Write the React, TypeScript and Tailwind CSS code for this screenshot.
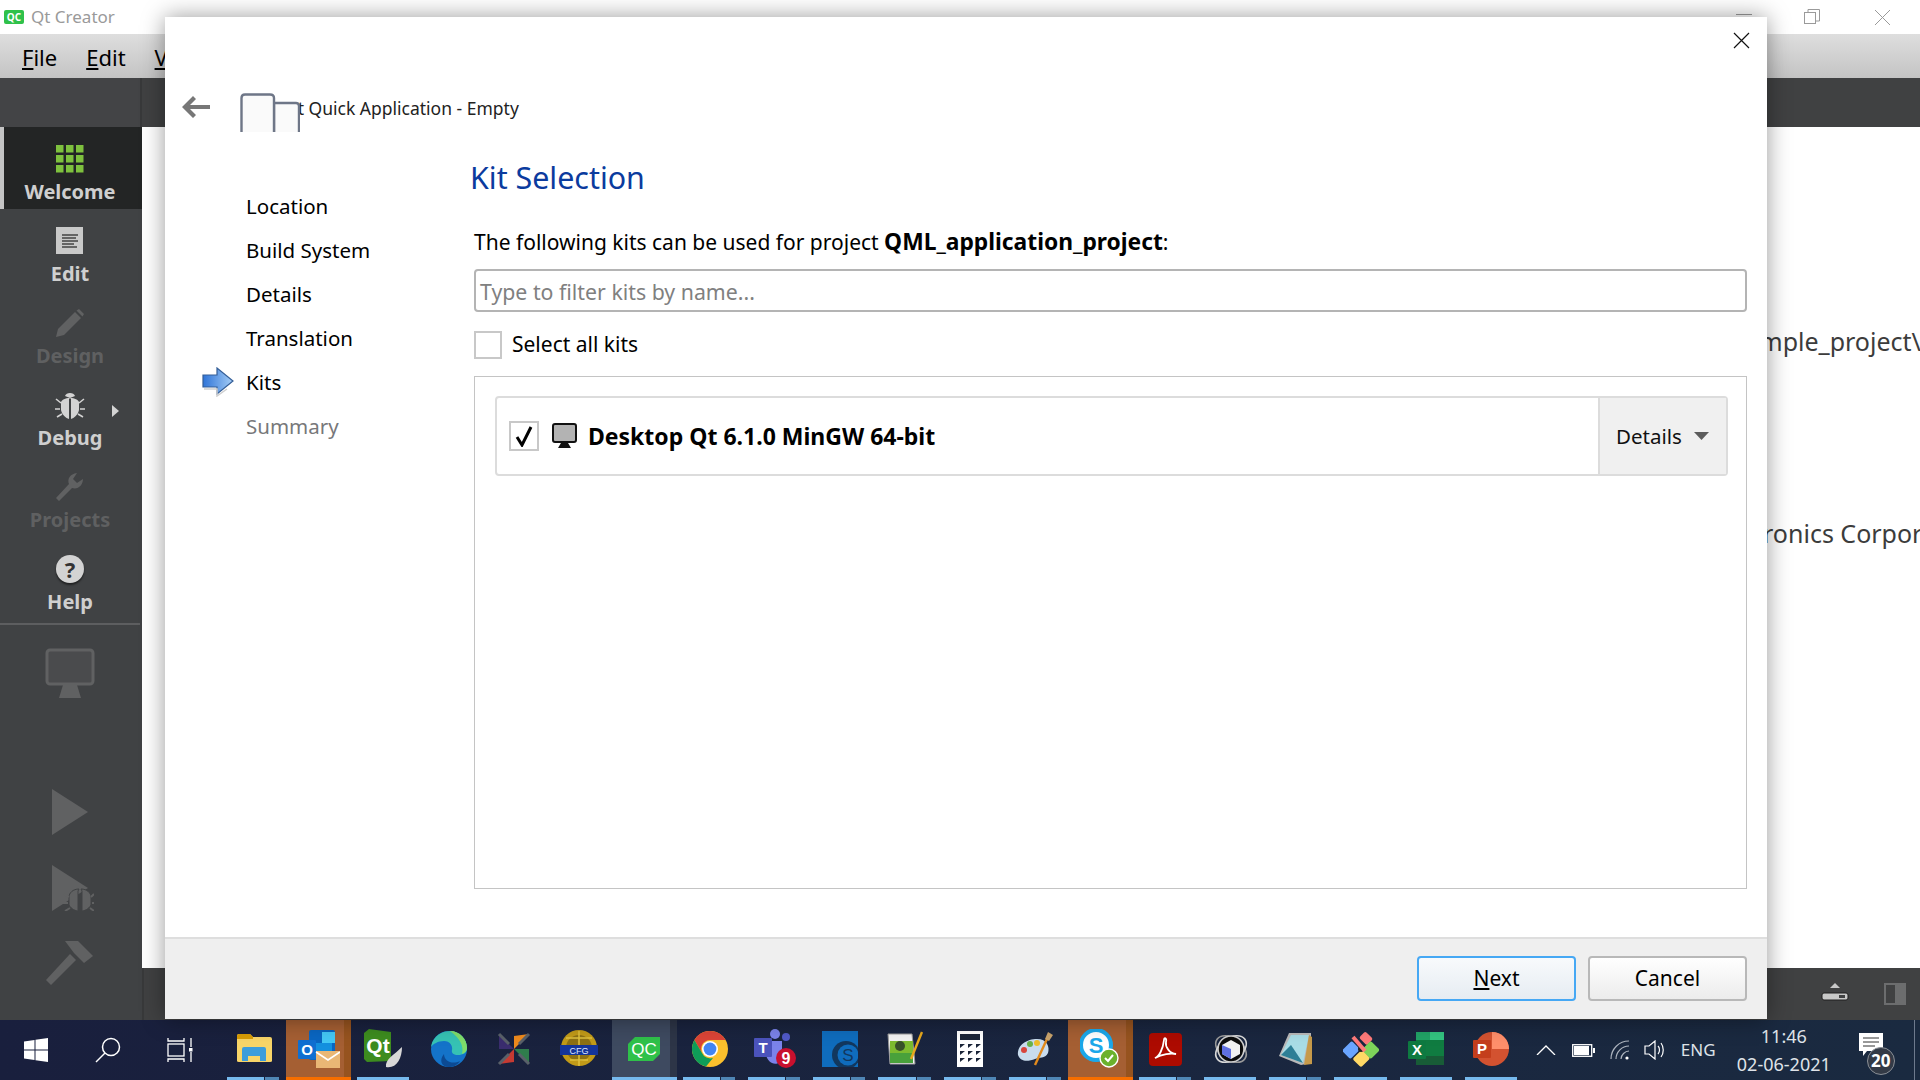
import type { ReactNode } from 'react'

const ui = { fontFamily: '"Noto Sans", "Open Sans", sans-serif' }

function WelcomeIcon() {
  const cells = [0, 1, 2]
  return (
    <svg width="28" height="28" viewBox="0 0 28 28">
      {cells.map((y) =>
        cells.map((x) => <rect key={`${x}-${y}`} x={x * 10} y={y * 10} width="7.5" height="7.5" fill="#7ec13e" />),
      )}
    </svg>
  )
}

function EditIcon() {
  return (
    <svg width="28" height="28" viewBox="0 0 28 28">
      <rect width="27" height="27" fill="#c9c9c9" />
      <path d="M6 8h16M6 11h14M6 14h16M6 17h12M6 20h15" stroke="#444" strokeWidth="1.4" />
    </svg>
  )
}

function PencilIcon() {
  return (
    <svg width="28" height="28" viewBox="0 0 28 28">
      <path d="M0 28 L2 20 L19 3 L25 9 L8 26 Z M20.5 1.5 L23 0 L28 5 L26.5 7.5 Z" fill="#606162" />
    </svg>
  )
}

function BugIcon() {
  return (
    <svg width="30" height="28" viewBox="0 0 30 28">
      <path d="M15 7 C10 7 7 9 6 11 L6 19 C7 24 11 27 14 28 L14 8 Z M15 7 C20 7 23 9 24 11 L24 19 C23 24 19 27 16 28 L16 8 Z" fill="#d3d3d3" />
      <path d="M10 5 C11 1 19 1 20 5 L15 7 Z" fill="#d3d3d3" />
      <path d="M6 12 L1 8 M24 12 L29 8 M5 18 H0 M25 18 H30 M7 23 L2 26 M23 23 L28 26" stroke="#d3d3d3" strokeWidth="1.6" />
    </svg>
  )
}

function WrenchIcon() {
  return (
    <svg width="28" height="28" viewBox="0 0 28 28">
      <path d="M3 28 L0 25 L13 11 C11 6 14 1 21 0 L17 6 L21 10 L27 6 C27 12 22 17 16 15 Z" fill="#606162" />
    </svg>
  )
}

function HelpIcon() {
  return (
    <div className="w-[28px] h-[28px] rounded-full bg-[#d3d3d3] flex items-center justify-center text-[22px] leading-none font-bold text-[#333] shadow-[0_2px_2px_rgba(0,0,0,0.5)]">
      ?
    </div>
  )
}

function SideItem({
  label,
  icon,
  active,
  disabled,
  arrow,
}: {
  label: string
  icon: ReactNode
  active?: boolean
  disabled?: boolean
  arrow?: boolean
}) {
  return (
    <div
      className={`relative h-[82px] flex flex-col items-center pt-[18px] pr-[2px] ${
        active ? 'bg-[#232525] border-l-4 border-[#c4c4c4] pr-[6px]' : ''
      }`}
    >
      <div className="h-[28px] flex items-center justify-center">{icon}</div>
      <span
        className={`mt-[6px] text-[20px] leading-[26px] font-bold ${
          disabled ? 'text-[#5f6061]' : 'text-[#cfcfcf]'
        }`}
      >
        {label}
      </span>
      {arrow && (
        <svg className="absolute left-[112px] top-[32px]" width="7" height="12" viewBox="0 0 7 12">
          <path d="M0 0 L7 6 L0 12 Z" fill="#d3d3d3" />
        </svg>
      )}
    </div>
  )
}

function Sidebar() {
  return (
    <div className="w-[142px] shrink-0 bg-[#404244] flex flex-col">
      <SideItem label="Welcome" icon={<WelcomeIcon />} active />
      <SideItem label="Edit" icon={<EditIcon />} />
      <SideItem label="Design" icon={<PencilIcon />} disabled />
      <SideItem label="Debug" icon={<BugIcon />} arrow />
      <SideItem label="Projects" icon={<WrenchIcon />} disabled />
      <SideItem label="Help" icon={<HelpIcon />} />
      <div className="h-[2px] mt-[4px] mr-[2px] bg-[#5d5e60]" />
      <div className="flex flex-col items-center pr-[2px]">
        <svg className="mt-[23px]" width="50" height="50" viewBox="0 0 50 50">
          <rect x="2" y="2" width="46" height="34" rx="3" fill="#4a4b4d" stroke="#606162" strokeWidth="3" />
          <path d="M18 37 H32 L36 50 H14 Z" fill="#606162" />
        </svg>
        <svg className="mt-[91px]" width="36" height="46" viewBox="0 0 36 46">
          <path d="M0 0 L36 23 L0 46 Z" fill="#606162" />
        </svg>
        <svg className="mt-[30px] ml-[6px]" width="42" height="46" viewBox="0 0 42 46">
          <path d="M0 0 L36 23 L0 46 Z" fill="#606162" />
          <path d="M27 24 C21 24 17 28 17 32 L17 40 C19 44 24 46 26 46 L26 26 Z M29 24 C35 24 39 28 39 32 L39 40 C37 44 32 46 30 46 L30 26 Z" fill="#606162" stroke="#404244" />
          <path d="M17 32 L12 29 M39 32 L42 29 M16 38 H11 M40 38 H42 M18 43 L13 46 M38 43 L42 46" stroke="#606162" strokeWidth="2" />
        </svg>
        <svg className="mt-[30px]" width="48" height="44" viewBox="0 0 48 44">
          <path d="M0 39 L24 13 L30 19 L5 44 Z" fill="#606162" />
          <path d="M19 0 H32 L47 15 L38 22 L28 12 Z" fill="#606162" />
        </svg>
      </div>
    </div>
  )
}

function WizardTile() {
  return (
    <svg className="absolute left-0 top-0" width="60" height="39" viewBox="0 0 60 39">
      <path d="M34 40 V10 H56 Q59 10 59 13 V40" fill="#fafafa" stroke="#6e7687" strokeWidth="2.4" />
      <path d="M1.5 40 V5 Q1.5 1.5 5 1.5 H30 Q34 1.5 34 5 V40" fill="#fafafa" stroke="#6e7687" strokeWidth="2.4" />
    </svg>
  )
}

function KitArrow() {
  return (
    <svg width="32" height="30" viewBox="0 0 32 30">
      <defs>
        <linearGradient id="kitArrow" x1="0" y1="0" x2="1" y2="0">
          <stop offset="0" stopColor="#2f74d8" />
          <stop offset="1" stopColor="#a5cdf5" />
        </linearGradient>
      </defs>
      <path d="M1 8 H15 V1 L31 14 L15 27 V20 H1 Z" fill="url(#kitArrow)" stroke="#345e97" strokeWidth="1.2" />
      <path d="M2 22 H15 V29 L25 22" fill="none" stroke="#cfcfcf" strokeWidth="1.5" />
    </svg>
  )
}

function Dialog() {
  const steps = ['Location', 'Build System', 'Details', 'Translation', 'Kits', 'Summary']
  return (
    <div
      style={ui}
      className="absolute left-[165px] top-[17px] w-[1602px] h-[1002px] bg-white flex flex-col shadow-[0_0_22px_rgba(0,0,0,0.4)]"
    >
      <svg className="absolute left-[1568px] top-[15px]" width="17" height="17" viewBox="0 0 17 17">
        <path d="M1 1 L16 16 M16 1 L1 16" stroke="#111" strokeWidth="1.2" />
      </svg>

      <div className="h-[110px] shrink-0 flex items-start pt-[76px] pl-[17px]">
        <svg className="mt-[2px]" width="28" height="24" viewBox="0 0 28 24">
          <path d="M0 12 L11 1 L14 4 L8 10 H28 V14 H8 L14 20 L11 23 Z" fill="#777" />
        </svg>
        <div className="relative ml-[30px] w-[300px] h-[39px] pl-[44px] text-[17.5px] leading-[30px] text-[#222] whitespace-nowrap">
          Qt Quick Application - Empty
          <WizardTile />
        </div>
      </div>

      <div className="flex-1 min-h-0 flex">
        <div className="w-[305px] shrink-0 pl-[37px] pt-[57px] flex flex-col text-[20.5px] text-black">
          {steps.map((step) => (
            <div key={step} className="h-[44px] flex items-center">
              <div className="w-[44px] shrink-0">{step === 'Kits' && <KitArrow />}</div>
              <span className={step === 'Summary' ? 'text-[#77787a]' : ''}>{step}</span>
            </div>
          ))}
        </div>

        <div className="flex-1 min-w-0 pr-[20px] pt-[31px] pb-[48px] flex flex-col">
          <h1 className="text-[30.4px] leading-[40px] text-[#0b3b9e]">Kit Selection</h1>
          <div className="pl-[4px] flex-1 min-h-0 flex flex-col">
            <p className="mt-[29px] text-[21px] leading-[30px] text-black">
              The following kits can be used for project <b className="text-[22.8px]">QML_application_project</b>:
            </p>
            <div className="mt-[12px] h-[43px] shrink-0 border-2 border-[#b4b4b4] rounded-[4px] pl-[4px] pt-[2px] flex items-center text-[21.3px] text-[#808080]">
              Type to filter kits by name...
            </div>
            <div className="mt-[19px] h-[28px] shrink-0 flex items-center gap-[10px] text-[21px] text-black">
              <div className="w-[28px] h-[28px] border-2 border-[#c8c8c8]" />
              Select all kits
            </div>
            <div className="mt-[17px] flex-1 min-h-0 border border-[#c4c4c4] pt-[19px] pl-[20px] pr-[18px]">
              <div className="h-[80px] border-2 border-[#dcdcdc] rounded-[4px] flex">
                <div className="flex-1 flex items-center pl-[12px]">
                  <div className="w-[30px] h-[30px] border-2 border-[#c8c8c8] flex items-center justify-center">
                    <svg width="20" height="22" viewBox="0 0 20 22">
                      <path d="M3 12 L8 20 L17 2" fill="none" stroke="#000" strokeWidth="3" />
                    </svg>
                  </div>
                  <svg className="ml-[13px]" width="25" height="26" viewBox="0 0 25 26">
                    <rect x="1" y="1" width="23" height="18" rx="2" fill="#b3b3b3" stroke="#111" strokeWidth="2" />
                    <path d="M9 20 H16 L19 25 H6 Z" fill="#111" />
                  </svg>
                  <span className="ml-[11px] text-[23px] font-bold text-black">Desktop Qt 6.1.0 MinGW 64-bit</span>
                </div>
                <div className="w-[128px] border-l-2 border-[#dcdcdc] bg-[#f0f0f0] flex items-center pl-[16px] gap-[12px] text-[20.5px] text-[#111]">
                  Details
                  <svg width="15" height="8" viewBox="0 0 15 8">
                    <path d="M0 0 H15 L7.5 8 Z" fill="#5c5c5c" />
                  </svg>
                </div>
              </div>
            </div>
          </div>
        </div>
      </div>

      <div className="h-[82px] shrink-0 bg-[#efefef] border-t-2 border-[#dedede] flex items-center justify-end gap-[12px] pr-[20px] pb-[2px] text-[21px] text-black">
        <button className="w-[159px] h-[45px] pt-[2px] rounded-[4px] border-2 border-[#46a8f4] bg-gradient-to-b from-[#f8fafc] to-[#e6ecf2]">
          <u>N</u>ext
        </button>
        <button className="w-[159px] h-[45px] pt-[2px] rounded-[4px] border-2 border-[#b8b8b8] bg-gradient-to-b from-[#ffffff] to-[#ececec]">
          Cancel
        </button>
      </div>
    </div>
  )
}

const taskText = { fontFamily: '"Liberation Sans", sans-serif', fontWeight: 700 }

const taskIcons: Record<string, ReactNode> = {
  explorer: (
    <svg width="36" height="32" viewBox="0 0 36 32">
      <path d="M1 3 Q1 1 3 1 H14 L17 4 H34 Q36 4 36 6 V28 Q36 29 34 29 H3 Q1 29 1 28 Z" fill="#f8d568" />
      <path d="M1 3 Q1 1 3 1 H14 L17 4 V6 H1 Z" fill="#d89c05" />
      <path d="M6 16 Q6 14 8 14 H28 Q30 14 30 16 V28 H24 V23 H12 V28 H6 Z" fill="#3c9ddb" />
    </svg>
  ),
  outlook: (
    <svg width="42" height="40" viewBox="0 0 42 40">
      <rect x="11" y="1" width="26" height="30" rx="2" fill="#0a66c2" />
      <rect x="24" y="3" width="13" height="11" fill="#44c8f5" />
      <rect x="16" y="14" width="18" height="14" fill="#1490df" />
      <rect x="0" y="11" width="18" height="19" rx="1" fill="#0f6fd1" />
      <text x="9" y="26" textAnchor="middle" fontSize="15" fill="#fff" style={taskText}>O</text>
      <rect x="18" y="22" width="24" height="17" fill="#e9b775" />
      <path d="M18 23 L30 31 L42 23" fill="none" stroke="#fff" strokeWidth="1.6" />
    </svg>
  ),
  qt: (
    <svg width="40" height="40" viewBox="0 0 40 40">
      <path d="M5 0 L27 3 V32 L3 33 L0 30 V4 Z" fill="#3d8c1f" />
      <text x="14" y="24" textAnchor="middle" fontSize="21" fill="#fff" style={taskText}>Qt</text>
      <path d="M22 38 C21 30 30 26 38 18 C38 30 32 40 22 38 Z" fill="#d8d8d8" />
    </svg>
  ),
  edge: (
    <svg width="38" height="38" viewBox="0 0 38 38">
      <circle cx="19" cy="19" r="18" fill="#1473c9" />
      <path d="M1 17 C3 5 13 1 20 1 C30 1 37 9 37 18 C37 23 33 25 28 25 C24 25 21 23 22 20 C23 16 20 11 14 11 C8 11 3 14 1 17 Z" fill="#36c2b4" />
      <path d="M20 1 C30 1 37 9 37 18 C37 21 35 23 32 24 C34 16 30 8 20 1 Z" fill="#7fdc6a" />
      <path d="M14 24 C14 31 22 35 30 31 C27 36 22 37 19 37 C11 37 9 30 14 24 Z" fill="#0c4a93" />
    </svg>
  ),
  cross: (
    <svg width="34" height="34" viewBox="0 0 34 34">
      <path d="M2 2 L17 17 L2 17 Z" fill="#3a2d6e" />
      <path d="M32 2 L17 17 L17 4 Z" fill="#ee8a1d" />
      <path d="M2 32 L17 17 L17 30 Z" fill="#c63a32" />
      <path d="M32 32 L17 17 L32 17 Z" fill="#2f7d4c" />
      <path d="M2 2 L12 12 M32 2 L22 12 M2 32 L12 22 M32 32 L22 22" stroke="#596069" strokeWidth="3" />
    </svg>
  ),
  cfg: (
    <svg width="38" height="38" viewBox="0 0 38 38">
      <circle cx="19" cy="18" r="18" fill="#c19a18" />
      <circle cx="19" cy="18" r="13" fill="#8d7114" />
      <path d="M6 8 H32 M10 30 H28 M19 1 V36" stroke="#e0c13c" strokeWidth="1.5" />
      <rect x="0" y="15" width="38" height="10" fill="#14359a" />
      <text x="19" y="24" textAnchor="middle" fontSize="9" fill="#dfe6ff" style={{ fontFamily: '"Liberation Sans", sans-serif' }}>CFG</text>
    </svg>
  ),
  qc: (
    <svg width="32" height="24" viewBox="0 0 32 24">
      <path d="M7 0 H32 V17 L25 24 H0 V7 Z" fill="#2fc14a" />
      <text x="16" y="18" textAnchor="middle" fontSize="17" fill="#fff" style={{ fontFamily: '"Liberation Sans", sans-serif' }}>QC</text>
    </svg>
  ),
  chrome: (
    <svg width="36" height="36" viewBox="0 0 36 36">
      <circle cx="18" cy="18" r="18" fill="#fbc02d" />
      <path d="M18 0 A18 18 0 0 1 33.6 9 H18 A9 9 0 0 0 10 22 L2.4 9 A18 18 0 0 1 18 0 Z" fill="#db4437" />
      <path d="M2.4 9 L10 22 A9 9 0 0 0 21 27 L14 35.6 A18 18 0 0 1 2.4 9 Z" fill="#0f9d58" />
      <circle cx="18" cy="18" r="8" fill="#fff" />
      <circle cx="18" cy="18" r="6.4" fill="#4285f4" />
    </svg>
  ),
  teams: (
    <svg width="42" height="40" viewBox="0 0 42 40">
      <circle cx="21" cy="5" r="5" fill="#7b83eb" />
      <circle cx="32" cy="8" r="4" fill="#5059c9" />
      <path d="M12 12 H28 V28 C28 34 22 36 18 34 C14 32 12 28 12 24 Z" fill="#7b83eb" />
      <rect x="0" y="9" width="18" height="19" rx="1" fill="#4b53bc" />
      <text x="9" y="24" textAnchor="middle" fontSize="15" fill="#fff" style={taskText}>T</text>
      <circle cx="32" cy="29" r="10" fill="#c8102e" />
      <text x="32" y="35" textAnchor="middle" fontSize="16" fill="#fff" style={taskText}>9</text>
    </svg>
  ),
  stm: (
    <svg width="36" height="36" viewBox="0 0 36 36">
      <rect width="36" height="36" fill="#0f6cbd" />
      <circle cx="24" cy="24" r="14" fill="#12375e" />
      <circle cx="26" cy="24" r="10.5" fill="#0f6cbd" />
      <text x="26" y="30" textAnchor="middle" fontSize="17" fill="#12375e" style={{ fontFamily: '"Liberation Sans", sans-serif' }}>S</text>
    </svg>
  ),
  npp: (
    <svg width="36" height="36" viewBox="0 0 36 36">
      <path d="M1 3 H25 L28 33 H3 Z" fill="#f2f2f2" stroke="#9a9a9a" />
      <rect x="3" y="10" width="23" height="22" fill="#7dbb2f" />
      <path d="M3 22 H26 V32 H3 Z" fill="#49a13b" />
      <circle cx="13" cy="15" r="5" fill="#38502a" />
      <path d="M24 28 L35 1" stroke="#e8a81c" strokeWidth="2.4" />
    </svg>
  ),
  calc: (
    <svg width="26" height="36" viewBox="0 0 26 36">
      <rect width="26" height="36" fill="#fff" />
      <rect x="3" y="3" width="20" height="6" fill="#1a2438" />
      <path d="M3 13h5l-5 4zM11 13h5l-5 4zM19 13h5l-5 4zM3 20h5l-5 4zM11 20h5l-5 4zM19 20h5l-5 4zM3 27h5l-5 4zM11 27h5l-5 4zM19 27h5l-5 4z" fill="#1a2438" />
    </svg>
  ),
  paint: (
    <svg width="36" height="36" viewBox="0 0 36 36">
      <path d="M1 24 C0 14 10 8 20 8 C30 8 33 16 31 22 C28 28 22 26 18 28 C12 30 4 32 1 24 Z" fill="#c9dcee" />
      <circle cx="7" cy="19" r="3" fill="#d8453d" />
      <circle cx="13" cy="13" r="3" fill="#69b24a" />
      <circle cx="20" cy="12" r="3" fill="#eebd2b" />
      <path d="M18 34 L30 8" stroke="#e28a1d" strokeWidth="2.4" />
      <path d="M28 8 L31 1 L36 4 L32 10 Z" fill="#c9a36c" />
    </svg>
  ),
  skype: (
    <svg width="40" height="40" viewBox="0 0 40 40">
      <circle cx="16" cy="16" r="15" fill="#fff" />
      <circle cx="16" cy="16" r="15" fill="none" stroke="#1ba8ea" strokeWidth="4" />
      <text x="16" y="24" textAnchor="middle" fontSize="22" fill="#1ba8ea" style={taskText}>S</text>
      <circle cx="29" cy="29" r="9" fill="#6bb12c" stroke="#fff" strokeWidth="1.4" />
      <path d="M25 29 L28 32 L33 26" fill="none" stroke="#fff" strokeWidth="2" />
    </svg>
  ),
  acrobat: (
    <svg width="33" height="33" viewBox="0 0 33 33">
      <rect width="33" height="33" rx="4" fill="#ad0b00" />
      <path d="M6 25 C10 24 14 16 15 7 C15 4 18 5 17 9 C16 14 21 21 27 21 C22 20 13 21 6 25 Z" fill="none" stroke="#fff" strokeWidth="1.8" />
    </svg>
  ),
  cube: (
    <svg width="36" height="36" viewBox="0 0 36 36">
      <ellipse cx="18" cy="18" rx="17" ry="11" fill="none" stroke="#9a9a9a" strokeWidth="1.6" transform="rotate(35 18 18)" />
      <ellipse cx="18" cy="18" rx="17" ry="11" fill="none" stroke="#d8d8d8" strokeWidth="1.6" transform="rotate(-35 18 18)" />
      <circle cx="18" cy="18" r="13" fill="#0c0c0c" stroke="#cfcfcf" strokeWidth="1.6" />
      <path d="M18 9 L27 14 V23 L18 28 L9 23 V14 Z" fill="#f1f1f1" />
      <path d="M18 18 L9 14 V23 L18 28 Z" fill="#5f6fe0" />
    </svg>
  ),
  notepad: (
    <svg width="34" height="36" viewBox="0 0 34 36">
      <path d="M10 2 H32 V32 L22 34 L0 25 Z" fill="#b9b9b9" />
      <path d="M12 4 H30 L24 32 L2 24 Z" fill="#a9dde6" />
      <path d="M2 24 L12 14 L24 32 Z" fill="#2d7f96" />
      <path d="M30 4 L33 6 V33 L25 34 Z" fill="#c69a4a" />
    </svg>
  ),
  gem: (
    <svg width="36" height="36" viewBox="0 0 36 36">
      <rect x="19" y="2" width="9" height="11" rx="2" fill="#ff7a7a" transform="rotate(-45 23 8)" />
      <rect x="1" y="13" width="14" height="12" rx="2" fill="#6aa5ff" transform="rotate(-45 8 19)" />
      <rect x="21" y="13" width="13" height="13" rx="2" fill="#7dd35a" transform="rotate(-45 27 19)" />
      <rect x="12" y="22" width="13" height="12" rx="2" fill="#ffd966" transform="rotate(-45 18 28)" />
      <circle cx="18" cy="18" r="3" fill="#222" />
      <path d="M10 6 L22 20" stroke="#ff7a7a" strokeWidth="4" />
    </svg>
  ),
  excel: (
    <svg width="36" height="34" viewBox="0 0 36 34">
      <rect x="8" y="0" width="28" height="33" rx="2" fill="#107c41" />
      <rect x="22" y="0" width="14" height="8" fill="#33c481" />
      <rect x="8" y="0" width="14" height="8" fill="#21a366" />
      <rect x="8" y="24" width="28" height="9" fill="#185c37" />
      <rect x="0" y="9" width="18" height="18" rx="1" fill="#0e7a41" />
      <text x="9" y="23" textAnchor="middle" fontSize="15" fill="#fff" style={taskText}>X</text>
    </svg>
  ),
  ppt: (
    <svg width="36" height="34" viewBox="0 0 36 34">
      <circle cx="19" cy="17" r="17" fill="#d35230" />
      <path d="M19 0 A17 17 0 0 1 36 17 H19 Z" fill="#ff8f6b" />
      <rect x="0" y="8" width="18" height="18" rx="1" fill="#c43e1c" />
      <text x="9" y="22" textAnchor="middle" fontSize="15" fill="#fff" style={taskText}>P</text>
    </svg>
  ),
}

type SlotState = 'idle' | 'open' | 'stack' | 'flash' | 'active'

function TaskSlot({ name, state }: { name: string; state: SlotState }) {
  const hot = state === 'flash'
  const selected = state === 'active'
  return (
    <div
      className={`relative w-[65.15px] h-full shrink-0 flex items-center justify-center pb-[2px] ${
        hot ? 'bg-[#a55f33]' : selected ? 'bg-[#3e4a60]' : ''
      }`}
    >
      {taskIcons[name]}
      {hot && <div className="absolute right-0 top-0 bottom-0 w-[7px] bg-[#96531f]" />}
      {selected && <div className="absolute right-0 top-0 bottom-0 w-[7px] bg-[#2d3547]" />}
      {hot && <div className="absolute left-0 right-0 bottom-0 h-[3px] bg-[#f76e00]" />}
      {state === 'open' && <div className="absolute left-[6px] right-[7px] bottom-0 h-[3px] bg-[#76b9ed]" />}
      {selected && <div className="absolute left-0 right-0 bottom-0 h-[3px] bg-[#76b9ed]" />}
      {state === 'stack' && (
        <div className="absolute left-[6px] right-[7px] bottom-0 h-[3px] flex">
          <div className="flex-1 bg-[#76b9ed]" />
          <div className="w-[14px] ml-[1px] bg-[#4f86b5]" />
        </div>
      )}
    </div>
  )
}

function Taskbar() {
  const apps: [string, SlotState][] = [
    ['explorer', 'stack'],
    ['outlook', 'flash'],
    ['qt', 'open'],
    ['edge', 'idle'],
    ['cross', 'idle'],
    ['cfg', 'idle'],
    ['qc', 'active'],
    ['chrome', 'stack'],
    ['teams', 'stack'],
    ['stm', 'stack'],
    ['npp', 'stack'],
    ['calc', 'stack'],
    ['paint', 'stack'],
    ['skype', 'flash'],
    ['acrobat', 'stack'],
    ['cube', 'open'],
    ['notepad', 'stack'],
    ['gem', 'open'],
    ['excel', 'open'],
    ['ppt', 'open'],
  ]
  return (
    <div style={ui} className="h-[60px] shrink-0 flex bg-gradient-to-r from-[#191f3d] to-[#1a2a40] text-[#dfe3e8]">
      <div className="w-[72px] flex items-center justify-center">
        <svg width="24" height="24" viewBox="0 0 24 24">
          <path d="M0 3.5 L10.5 2 V11.5 H0 Z M11.5 1.8 L24 0 V11.5 H11.5 Z M0 12.5 H10.5 V22 L0 20.5 Z M11.5 12.5 H24 V24 L11.5 22.2 Z" fill="#fff" />
        </svg>
      </div>
      <div className="w-[72px] flex items-center justify-center">
        <svg width="26" height="26" viewBox="0 0 26 26">
          <circle cx="16" cy="10" r="8.5" fill="none" stroke="#fff" strokeWidth="1.5" />
          <path d="M10 16 L1 25" stroke="#fff" strokeWidth="1.5" />
        </svg>
      </div>
      <div className="w-[77px] flex items-center justify-center pr-[5px]">
        <svg width="26" height="24" viewBox="0 0 26 24">
          <path d="M1 0 V3 H17 V0 M1 24 V21 H17 V24" fill="none" stroke="#fff" strokeWidth="1.3" />
          <rect x="1" y="6" width="16" height="12" fill="none" stroke="#fff" strokeWidth="1.3" />
          <path d="M24 0 V9 M24 14 V24" stroke="#fff" strokeWidth="1.3" />
          <rect x="22" y="10" width="3.5" height="3.5" fill="#fff" />
        </svg>
      </div>
      {apps.map(([name, state]) => (
        <TaskSlot key={name} name={name} state={state} />
      ))}
      <div className="flex-1 flex items-center">
        <svg className="ml-[12px]" width="20" height="10" viewBox="0 0 20 10">
          <path d="M1 10 L10 1 L19 10" fill="none" stroke="#fff" strokeWidth="1.3" />
        </svg>
        <svg className="ml-[16px]" width="23" height="13" viewBox="0 0 23 13">
          <rect x="0.7" y="0.7" width="19" height="11.6" fill="none" stroke="#fff" strokeWidth="1.3" />
          <rect x="2" y="2" width="15" height="9" fill="#fff" />
          <rect x="21" y="4" width="2" height="5" fill="#fff" />
        </svg>
        <svg className="ml-[15px]" width="20" height="20" viewBox="0 0 20 20">
          <path d="M1 19 C1 9 9 1 19 1 M6 19 C6 12 12 6 19 6 M11 19 C11 15 15 11 19 11" fill="none" stroke="#aeb5bf" strokeWidth="1.2" />
          <circle cx="17" cy="18" r="1.6" fill="#fff" />
        </svg>
        <svg className="ml-[14px]" width="23" height="20" viewBox="0 0 23 20">
          <path d="M1 6 H5 L11 1 V19 L5 14 H1 Z M14 6 C16 8 16 12 14 14 M17 3 C20 7 20 13 17 17" fill="none" stroke="#fff" strokeWidth="1.2" />
        </svg>
        <span className="ml-[14px] text-[17px] w-[35px]">ENG</span>
        <div className="ml-[20px] w-[96px] text-center text-[18px] leading-[28px]">
          <div>11:46</div>
          <div>02-06-2021</div>
        </div>
        <div className="relative ml-[27px] w-[34px] h-[34px]">
          <svg width="24" height="24" viewBox="0 0 24 24">
            <path d="M0 0 H24 V18 H8 L4 23 V18 H0 Z" fill="#fff" />
            <path d="M4 5 H20 M4 9 H20 M4 13 H16" stroke="#333" strokeWidth="1" />
          </svg>
          <div className="absolute left-[8px] top-[14px] w-[28px] h-[28px] rounded-full bg-[#333a46] border border-[#8a8f96] flex items-center justify-center text-[17px] font-bold text-white">
            20
          </div>
        </div>
        <div className="ml-auto mr-[5px] w-[1px] h-full bg-[#6d7a8d]" />
      </div>
    </div>
  )
}

export default function App() {
  return (
    <div style={ui} className="relative w-[1920px] h-[1080px] overflow-hidden flex flex-col bg-white">
      {/* main window title */}
      <div className="h-[34px] shrink-0 bg-white flex items-center pl-[4px] text-[17px] text-[#9a9a9a]">
        <div className="w-[20px] h-[14px] rounded-[2px] bg-[#2fc14a] text-white text-[10px] leading-[14px] text-center font-bold">
          QC
        </div>
        <span className="ml-[7px]">Qt Creator</span>
        <div className="ml-auto flex items-center pr-[29px]">
          <div className="w-[16px] h-[1px] bg-[#9a9a9a] mb-[5px] mr-[52px]" />
          <svg className="mr-[54px]" width="16" height="16" viewBox="0 0 16 16">
            <rect x="0.5" y="3.5" width="11" height="11" fill="none" stroke="#9a9a9a" />
            <path d="M4 3 V0.5 H15.5 V12 H12" fill="none" stroke="#9a9a9a" />
          </svg>
          <svg width="17" height="17" viewBox="0 0 17 17">
            <path d="M1 1 L16 16 M16 1 L1 16" stroke="#9a9a9a" />
          </svg>
        </div>
      </div>

      <div className="h-[44px] shrink-0 bg-gradient-to-b from-[#dedede] to-[#c4c4c4] flex items-center pl-[22px] pt-[3px] gap-[29px] text-[22px] text-black">
        <span><u>F</u>ile</span>
        <span><u>E</u>dit</span>
        <span><u>V</u>iew</span>
      </div>

      <div className="h-[49px] shrink-0 bg-[#404142] flex">
        <div className="w-[142px] bg-[#434446] border-r-2 border-[#38393a]" />
      </div>

      <div className="flex-1 min-h-0 flex">
        <Sidebar />
        <div className="flex-1 min-w-0 flex flex-col">
          <div className="flex-1 min-h-0 overflow-hidden pl-[1590px] pt-[197px] text-[25px] leading-[34px] text-[#3c3c3c] whitespace-nowrap">
            <div>xample_project\</div>
            <div className="mt-[158px] pl-[10px]">ctronics Corpor</div>
          </div>
          <div className="h-[52px] shrink-0 bg-[#404142] border-l-2 border-[#38393a] flex items-center justify-end pr-[14px] gap-[34px]">
            <svg width="30" height="24" viewBox="0 0 30 24">
              <path d="M10 6 L15 1 L20 6 Z" fill="#c8c8c8" />
              <rect x="2" y="11" width="26" height="7" rx="2" fill="#c8c8c8" stroke="#1f1f1f" />
              <rect x="19" y="13" width="6" height="3" fill="#404142" />
            </svg>
            <svg width="22" height="22" viewBox="0 0 22 22">
              <rect x="0" y="0" width="22" height="22" fill="#6c6d6e" />
              <rect x="2" y="2" width="9" height="18" fill="#404142" />
            </svg>
          </div>
        </div>
      </div>

      <Taskbar />
      <Dialog />
    </div>
  )
}
